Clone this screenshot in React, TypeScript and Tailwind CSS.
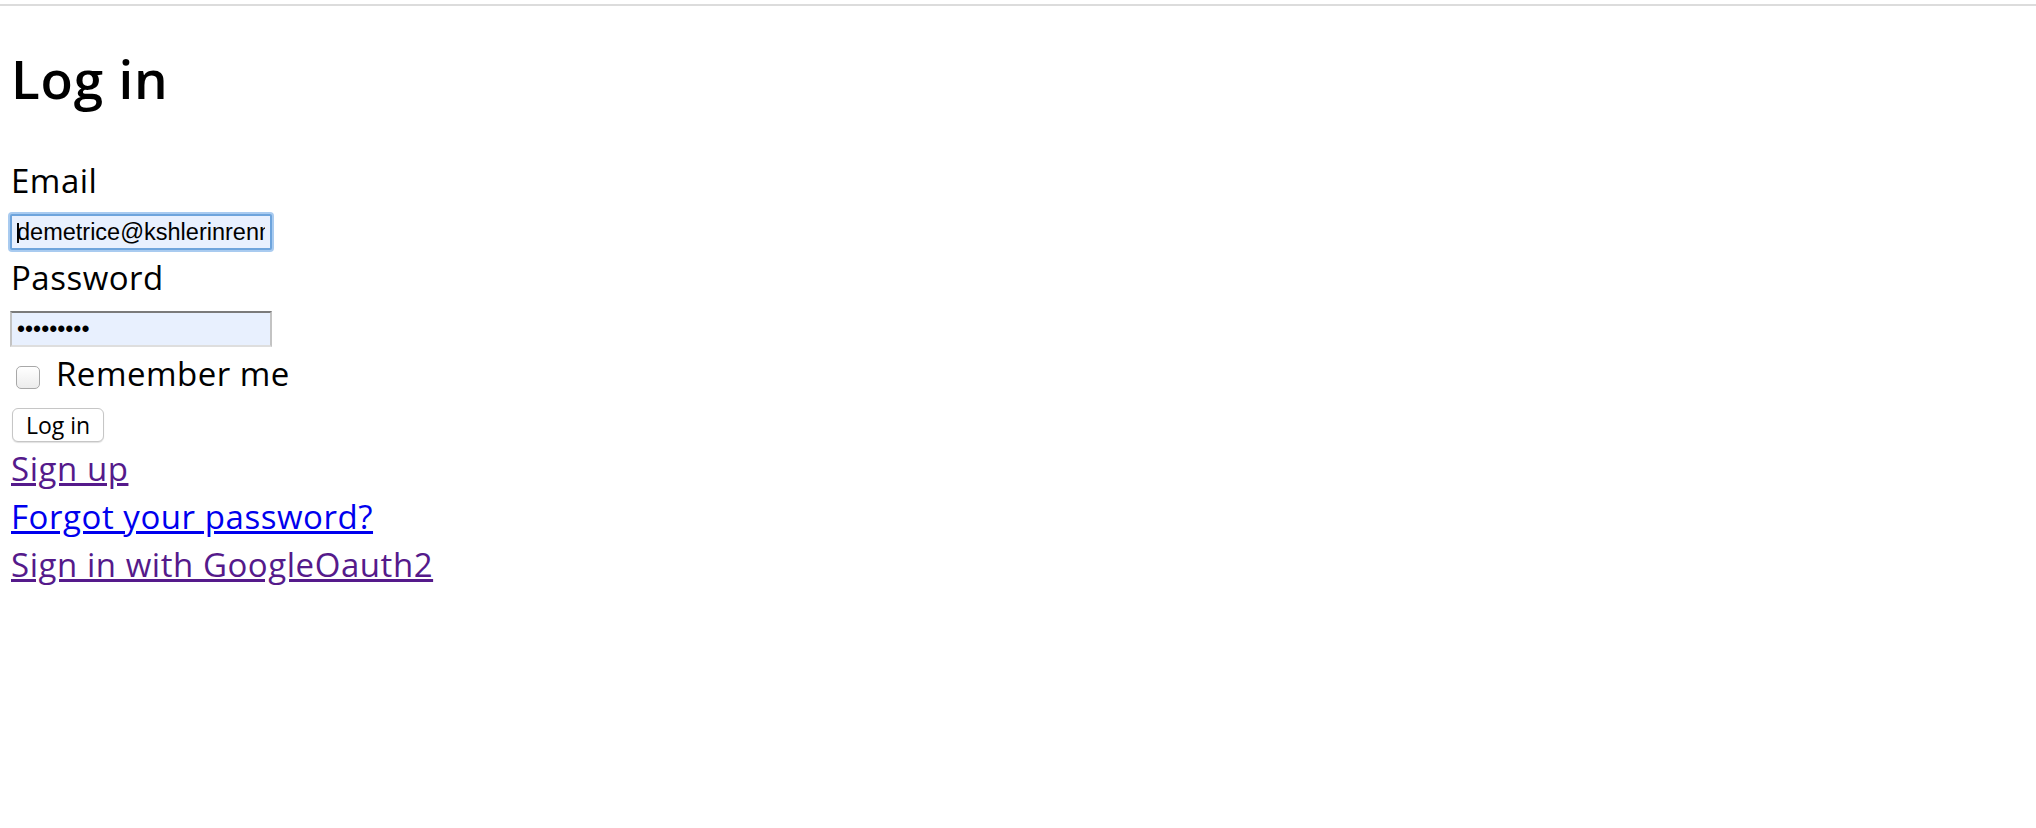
import React from "react";

export default function App() {
  return (
    <div className="min-h-[828px] w-full bg-white text-black font-['Open_Sans',sans-serif]">
      <div className="h-[4px]" />
      <div className="h-[2px] bg-[#dcdcdc]" />
      <div className="pl-[11px]">
        <h1 className="mt-[41px] h-[64px] text-[53px] leading-[64px] font-semibold tracking-[0.8px]">Log in</h1>
        <form className="flex flex-col items-start" onSubmit={(e) => e.preventDefault()}>
          <label className="mt-[50px] block h-[40px] text-[33px] leading-[40px] tracking-[0.5px]">Email</label>
          <div className="relative mt-[13px] -ml-[1px]">
            <input
              type="email"
              readOnly
              defaultValue="demetrice@kshlerinrenner.com"
              className="block h-[36px] w-[262px] rounded-[2px] border-2 border-[#6ea4dc] bg-[#e8f0fe] px-[5px] text-[23.5px] leading-[32px] text-black outline-none shadow-[0_0_0_2px_#a9cbf0] font-['Liberation_Sans',Arial,sans-serif]"
            />
            <span className="absolute left-[7px] top-[9px] h-[20px] w-[2px] bg-black" />
          </div>
          <label className="mt-[8px] block h-[40px] text-[33px] leading-[40px] tracking-[0.5px]">Password</label>
          <input
            type="password"
            readOnly
            defaultValue="secret123"
            className="-ml-[1px] mt-[13px] block h-[36px] w-[262px] border-2 border-t-[#7b7b7b] border-x-[#c3c3c3] border-b-[#dedede] bg-[#e8f0fe] px-[5px] text-[23px] leading-[32px] text-black outline-none font-['Liberation_Sans',Arial,sans-serif]"
          />
          <div className="mt-[7px] flex h-[40px] items-center">
            <span className="ml-[5px] mt-[6px] block h-[23px] w-[24px] rounded-[5px] border border-[#a8a8a8] bg-gradient-to-b from-white to-[#ececec]" />
            <span className="ml-[16px] text-[33px] leading-[40px] tracking-[0.5px]">Remember me</span>
          </div>
          <button
            type="submit"
            className="mt-[14px] ml-[1px] flex h-[34px] w-[92px] items-center justify-center rounded-[6px] border border-[#c6c6c6] bg-white text-[23px] leading-[30px] text-black shadow-[0_1px_1px_rgba(0,0,0,0.12)]"
          >
            Log in
          </button>
          <div className="mt-[3px] flex flex-col text-[33px] leading-[48px] tracking-[0.55px]">
            <a href="#" className="text-[#551a8b] underline">Sign up</a>
            <a href="#" className="text-[#0000ee] underline">Forgot your password?</a>
            <a href="#" className="text-[#551a8b] underline">Sign in with GoogleOauth2</a>
          </div>
        </form>
      </div>
    </div>
  );
}
